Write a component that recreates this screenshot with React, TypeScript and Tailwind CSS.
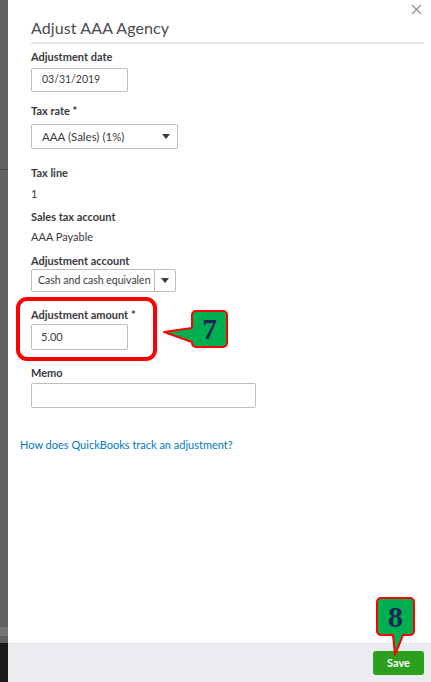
import React from "react";

function Caret() {
  return (
    <svg width="8" height="5" viewBox="0 0 8 5" className="shrink-0">
      <path d="M0 0h8L4 5z" fill="#393a3d" />
    </svg>
  );
}

function Label({ children, className = "" }: { children: React.ReactNode; className?: string }) {
  return (
    <div className={"text-[11px] font-bold leading-[14px] text-[#393a3d] " + className}>
      {children}
    </div>
  );
}

function Callout7() {
  return (
    <div className="absolute left-[162px] top-[309px] h-[40px] w-[68px]">
      <svg width="68" height="40" viewBox="0 0 68 40" className="absolute inset-0">
        <path
          d="M34 2h27a4 4 0 0 1 4 4v28a4 4 0 0 1-4 4H34a4 4 0 0 1-4-4v-1L2 23l28-4V6a4 4 0 0 1 4-4z"
          fill="#00b050"
          stroke="#ff0000"
          strokeWidth="2"
          strokeLinejoin="round"
        />
      </svg>
      <div className="absolute left-[30px] top-[2px] flex h-[36px] w-[35px] items-center justify-center font-['Liberation_Serif',serif] text-[30px] font-bold leading-none text-[#1f2656]">
        7
      </div>
    </div>
  );
}

function Callout8() {
  return (
    <div className="absolute left-[375px] top-[597px] h-[60px] w-[41px]">
      <svg width="41" height="60" viewBox="0 0 41 60" className="absolute inset-0">
        <path
          d="M6 1h29a4 4 0 0 1 4 4v29a4 4 0 0 1-4 4h-7L20 58l-2-20H6a4 4 0 0 1-4-4V5a4 4 0 0 1 4-4z"
          fill="#00b050"
          stroke="#ff0000"
          strokeWidth="2"
          strokeLinejoin="round"
        />
      </svg>
      <div className="absolute left-[2px] top-[1px] flex h-[37px] w-[37px] items-center justify-center font-['Liberation_Serif',serif] text-[30px] font-bold leading-none text-[#1f2656]">
        8
      </div>
    </div>
  );
}

export default function App() {
  return (
    <div className="relative flex h-[682px] w-[431px] overflow-hidden bg-white font-['Lato','Noto_Sans',sans-serif] text-[#393a3d]">
      {/* page behind the drawer */}
      <div className="flex w-[8px] shrink-0 flex-col">
        <div className="h-[169px] bg-[#616161]" />
        <div className="h-px bg-[#4b4b4b]" />
        <div className="flex-1 bg-[#616161]" />
        <div className="h-[9px] bg-[#757575]" />
        <div className="h-[7px] bg-[#616161]" />
        <div className="h-[39px] bg-[#1a1a1a]" />
      </div>

      <div className="flex flex-1 flex-col">
        <div className="relative flex-1 pl-[23px] pr-[7px]">
          <button className="absolute right-[9px] top-[4px] text-[#8d9096]">
            <svg width="11" height="11" viewBox="0 0 11 11">
              <path d="M1 1l9 9M10 1l-9 9" stroke="currentColor" strokeWidth="1.2" />
            </svg>
          </button>

          <h1 className="mt-[16px] text-[16px] font-normal leading-[24px] tracking-[0.1px] text-[#4a4b4f]">
            Adjust AAA Agency
          </h1>
          <div className="mt-[2px] h-[2px] bg-[#e3e5e8]" />

          <Label className="mt-[6px]">Adjustment date</Label>
          <div className="mt-[4px] flex h-[24px] w-[97px] items-center rounded-[2px] border border-[#babec5] pl-[10px] text-[10.5px]">
            03/31/2019
          </div>

          <Label className="mt-[12px]">Tax rate *</Label>
          <div className="mt-[6px] flex h-[25px] w-[147px] items-center justify-between rounded-[2px] border border-[#babec5] pl-[10px] pr-[7px] text-[11.5px]">
            <span>AAA (Sales) (1%)</span>
            <Caret />
          </div>

          <Label className="mt-[17px]">Tax line</Label>
          <div className="mt-[7px] text-[11px] leading-[14px]">1</div>

          <Label className="mt-[9px]">Sales tax account</Label>
          <div className="mt-[6px] text-[11px] leading-[14px]">AAA Payable</div>

          <Label className="mt-[10px]">Adjustment account</Label>
          <div className="mt-px flex h-[23px] w-[145px] rounded-[2px] border border-[#babec5] text-[10.5px]">
            <div className="flex w-[123px] items-center overflow-hidden whitespace-nowrap border-r border-[#babec5] pl-[6px]">
              Cash and cash equivalen
            </div>
            <div className="flex flex-1 items-center justify-center">
              <Caret />
            </div>
          </div>

          <Label className="mt-[16px]">Adjustment amount *</Label>
          <div className="mt-[2px] flex h-[26px] w-[97px] items-center rounded-[2px] border border-[#babec5] pl-[9px] text-[11px]">
            5.00
          </div>

          <Label className="mt-[16px]">Memo</Label>
          <div className="mt-[3px] h-[25px] w-[225px] rounded-[2px] border border-[#babec5]" />

          <a className="-ml-[11px] mt-[30px] block text-[11px] leading-[14px] text-[#0077c5]">
            How does QuickBooks track an adjustment?
          </a>
        </div>

        <footer className="flex h-[39px] items-center justify-end border-t border-[#e3e5e8] bg-[#ebecf0] pr-[7px]">
          <button className="h-[24px] w-[51px] rounded-[3px] bg-[#2ca01c] text-[11px] font-bold text-white">
            Save
          </button>
        </footer>
      </div>

      {/* annotation overlays */}
      <div className="absolute left-[16px] top-[297px] h-[64px] w-[141px] rounded-[11px] border-[4px] border-[#ff0000]" />
      <Callout7 />
      <Callout8 />
    </div>
  );
}
